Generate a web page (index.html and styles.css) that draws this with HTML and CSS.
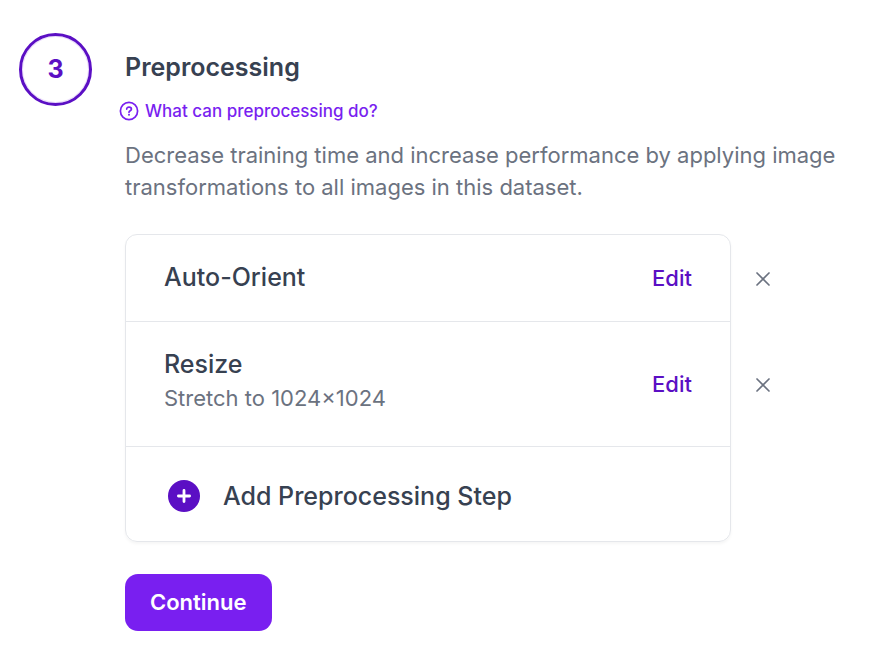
FILE: index.html
```
<!DOCTYPE html>
<html lang="en">
<head>
	<meta charset="utf-8">
	<title>Preprocessing</title>
	<link rel="stylesheet" href="styles.css">
</head>
<body>
	<div class="main">
		<div class="number">3</div>
		<div class="content">
			<h2>Preprocessing</h2>
			<a class="help" href="#">
				<svg width="20" height="20" viewBox="0 0 20 20" fill="none" stroke="currentColor" stroke-width="1.7" stroke-linecap="round">
					<circle cx="10" cy="10" r="8.6"/>
					<path d="M7.7 8.1C7.7 6.9 8.7 6.2 10 6.2s2.4.8 2.4 2c0 1.5-2.4 1.6-2.4 3.1"/>
					<circle cx="10" cy="13.8" r="1" fill="currentColor" stroke="none"/>
				</svg>
				<span>What can preprocessing do?</span>
			</a>
			<p class="desc">Decrease training time and increase performance by applying image transformations to all images in this dataset.</p>

			<ul class="steps">
				<li>
					<div class="info">
						<h3>Auto-Orient</h3>
					</div>
					<button class="edit-btn" type="button">Edit</button>
					<button class="remove-btn" type="button" aria-label="Remove Auto-Orient">
						<svg width="14" height="14" viewBox="0 0 14 14" stroke="currentColor" stroke-width="1.7" stroke-linecap="round">
							<path d="M1 1l12 12M13 1L1 13"/>
						</svg>
					</button>
				</li>
				<li class="detailed">
					<div class="info">
						<h3>Resize</h3>
						<p>Stretch to 1024×1024</p>
					</div>
					<button class="edit-btn" type="button">Edit</button>
					<button class="remove-btn" type="button" aria-label="Remove Resize">
						<svg width="14" height="14" viewBox="0 0 14 14" stroke="currentColor" stroke-width="1.7" stroke-linecap="round">
							<path d="M1 1l12 12M13 1L1 13"/>
						</svg>
					</button>
				</li>
				<li>
					<button class="add-btn" type="button">
						<svg width="32" height="32" viewBox="0 0 32 32">
							<circle cx="16" cy="16" r="16" fill="#5b0fc4"/>
							<path d="M16 10.4v11.2M10.4 16h11.2" stroke="#fff" stroke-width="2.8" stroke-linecap="round"/>
						</svg>
						<span>Add Preprocessing Step</span>
					</button>
				</li>
			</ul>

			<button class="continue-btn" type="button">Continue</button>
		</div>
	</div>
</body>
</html>
```
FILE: styles.css
```
* {
	margin: 0;
	padding: 0;
	box-sizing: border-box;
}
body {
	background: #fff;
	color: #374151;
	font-family: Inter, "Liberation Sans", sans-serif;
	font-size: 22px;
	line-height: 32px;
}
button {
	border: 0;
	background: none;
	color: inherit;
	font: inherit;
	cursor: pointer;
}
svg {
	display: block;
	flex: none;
}

.main {
	display: flex;
	gap: 33px;
	padding: 33px 20px 32px 19px;
}
.number {
	flex: none;
	width: 73px;
	height: 73px;
	border: 3px solid #5b0fc4;
	border-radius: 50%;
	box-shadow: inset 0 0 0 1px #eadcfb;
	color: #5b0fc4;
	font-size: 25px;
	font-weight: 700;
	line-height: 67px;
	text-align: center;
}
.content {
	flex: 1;
	min-width: 0;
	padding-top: 18px;
}
h2 {
	font-size: 25px;
	font-weight: 600;
	line-height: 32px;
}
.help {
	display: flex;
	align-items: center;
	gap: 6px;
	width: fit-content;
	margin: 16px 0 16px -6px;
	color: #791ff0;
	font-size: 17px;
	font-weight: 500;
	line-height: 24px;
	text-decoration: none;
}
.desc {
	color: #6b7280;
}

.steps {
	margin: 31px 133px 32px 0;
	border: 1px solid #e5e7eb;
	border-radius: 12px;
	box-shadow: 0 2px 3px rgba(0, 0, 0, .04);
	list-style: none;
}
.steps li {
	display: flex;
	align-items: center;
	min-height: 86px;
	padding: 0 38px;
}
.steps li + li {
	border-top: 1px solid #e5e7eb;
}
.steps .detailed {
	min-height: 125px;
}
.steps li:last-child {
	min-height: 95px;
}
.info {
	flex: 1;
	padding-bottom: 2px;
}
.info p {
	color: #6b7280;
}
.detailed .info {
	padding-bottom: 8px;
}
h3, .add-btn {
	font-size: 25px;
	font-weight: 500;
	line-height: 36px;
}
.edit-btn {
	color: #5b0fc4;
	font-weight: 500;
}
/* sits in the gutter outside the card */
.remove-btn {
	display: flex;
	align-items: center;
	justify-content: center;
	width: 32px;
	height: 32px;
	margin: 0 -87px 0 55px;
	padding-top: 2px;
	color: #6b7280;
}
.add-btn {
	display: flex;
	align-items: center;
	gap: 23px;
	padding: 4px 4px 0;
}

.continue-btn {
	display: block;
	padding: 12px 25px 13px;
	border-radius: 13px;
	background: #791ff0;
	color: #fff;
	font-weight: 600;
}
```
